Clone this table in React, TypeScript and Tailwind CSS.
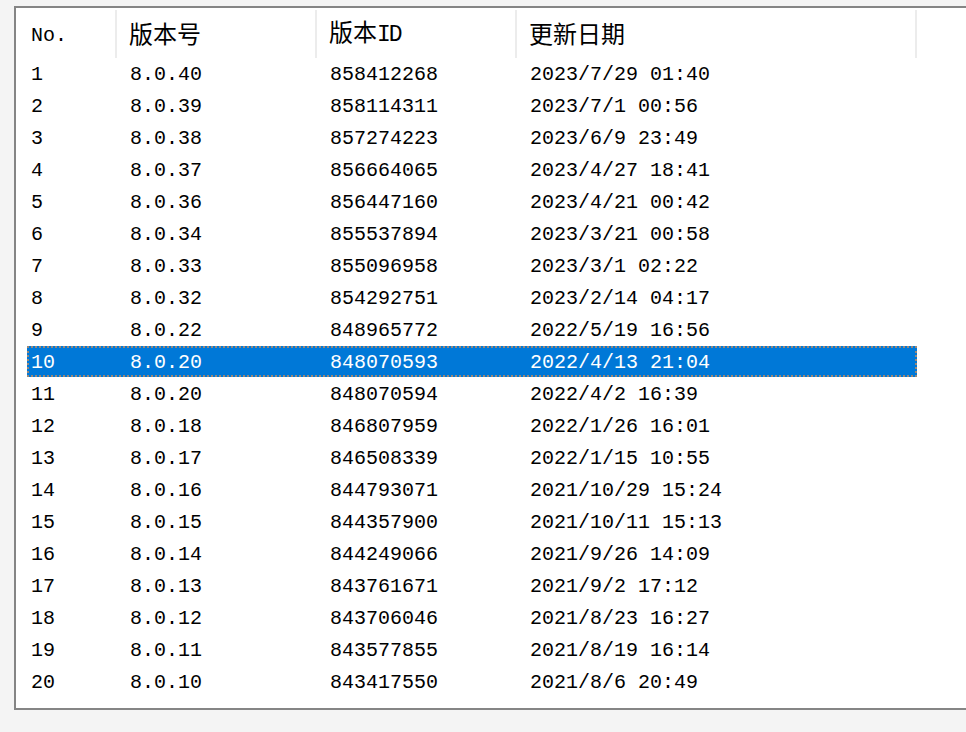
import React from "react";

const rows: [string, string, string, string][] = [
  ["1", "8.0.40", "858412268", "2023/7/29 01:40"],
  ["2", "8.0.39", "858114311", "2023/7/1 00:56"],
  ["3", "8.0.38", "857274223", "2023/6/9 23:49"],
  ["4", "8.0.37", "856664065", "2023/4/27 18:41"],
  ["5", "8.0.36", "856447160", "2023/4/21 00:42"],
  ["6", "8.0.34", "855537894", "2023/3/21 00:58"],
  ["7", "8.0.33", "855096958", "2023/3/1 02:22"],
  ["8", "8.0.32", "854292751", "2023/2/14 04:17"],
  ["9", "8.0.22", "848965772", "2022/5/19 16:56"],
  ["10", "8.0.20", "848070593", "2022/4/13 21:04"],
  ["11", "8.0.20", "848070594", "2022/4/2 16:39"],
  ["12", "8.0.18", "846807959", "2022/1/26 16:01"],
  ["13", "8.0.17", "846508339", "2022/1/15 10:55"],
  ["14", "8.0.16", "844793071", "2021/10/29 15:24"],
  ["15", "8.0.15", "844357900", "2021/10/11 15:13"],
  ["16", "8.0.14", "844249066", "2021/9/26 14:09"],
  ["17", "8.0.13", "843761671", "2021/9/2 17:12"],
  ["18", "8.0.12", "843706046", "2021/8/23 16:27"],
  ["19", "8.0.11", "843577855", "2021/8/19 16:14"],
  ["20", "8.0.10", "843417550", "2021/8/6 20:49"],
];

const mono = "font-['Liberation_Mono','Noto_Sans_CJK_SC',monospace] text-[20px] leading-none";
const cjk = "font-['Noto_Sans_CJK_SC',sans-serif] text-[24px] leading-none";

function HeaderCell({ w, pl, children }: { w: string; pl: string; children: React.ReactNode }) {
  return (
    <div className={`${w} ${pl} relative flex h-full items-center shrink-0`}>
      <div className="flex items-baseline text-black">{children}</div>
      <div className="absolute right-0 top-[2px] bottom-0 w-[2px] bg-[#ececec]" />
    </div>
  );
}

export default function App() {
  return (
    <div className="h-[732px] w-[966px] overflow-hidden bg-[#f4f4f4] pt-[6px] pl-[14px]">
      <div className="h-[704px] w-[960px] border-2 border-r-0 border-[#858585] bg-white">
        <div className="h-full overflow-hidden pl-[11px]">
          <div className="flex h-[50px] items-stretch">
            <HeaderCell w="w-[90px]" pl="pl-[4px] pt-[5px]">
              <span className={mono}>No.</span>
            </HeaderCell>
            <HeaderCell w="w-[200px]" pl="pl-[12px]">
              <span className={cjk}>版本号</span>
            </HeaderCell>
            <HeaderCell w="w-[200px]" pl="pl-[12px]">
              <span className={cjk}>版本</span>
              <span className="font-['Liberation_Mono',monospace] text-[23px] leading-none tracking-[-2px]">ID</span>
            </HeaderCell>
            <HeaderCell w="w-[400px]" pl="pl-[12px]">
              <span className={cjk}>更新日期</span>
            </HeaderCell>
          </div>
          <div className="flex flex-col">
            {rows.map((r, i) => {
              const sel = r[0] === "10";
              return (
                <div key={i} className="h-[32px] w-[890px] shrink-0">
                  <div
                    className={`flex h-[31px] items-center whitespace-pre pt-[3px] ${mono} ${
                      sel
                        ? "border-2 border-dotted border-[#9a8878] bg-[#0078d7] text-white"
                        : "border-2 border-transparent text-black"
                    }`}
                  >
                    <div className="w-[90px] shrink-0 pl-[2px]">{r[0]}</div>
                    <div className="w-[200px] shrink-0 pl-[11px]">{r[1]}</div>
                    <div className="w-[200px] shrink-0 pl-[11px]">{r[2]}</div>
                    <div className="w-[396px] shrink-0 pl-[11px]">{r[3]}</div>
                  </div>
                </div>
              );
            })}
          </div>
        </div>
      </div>
    </div>
  );
}
